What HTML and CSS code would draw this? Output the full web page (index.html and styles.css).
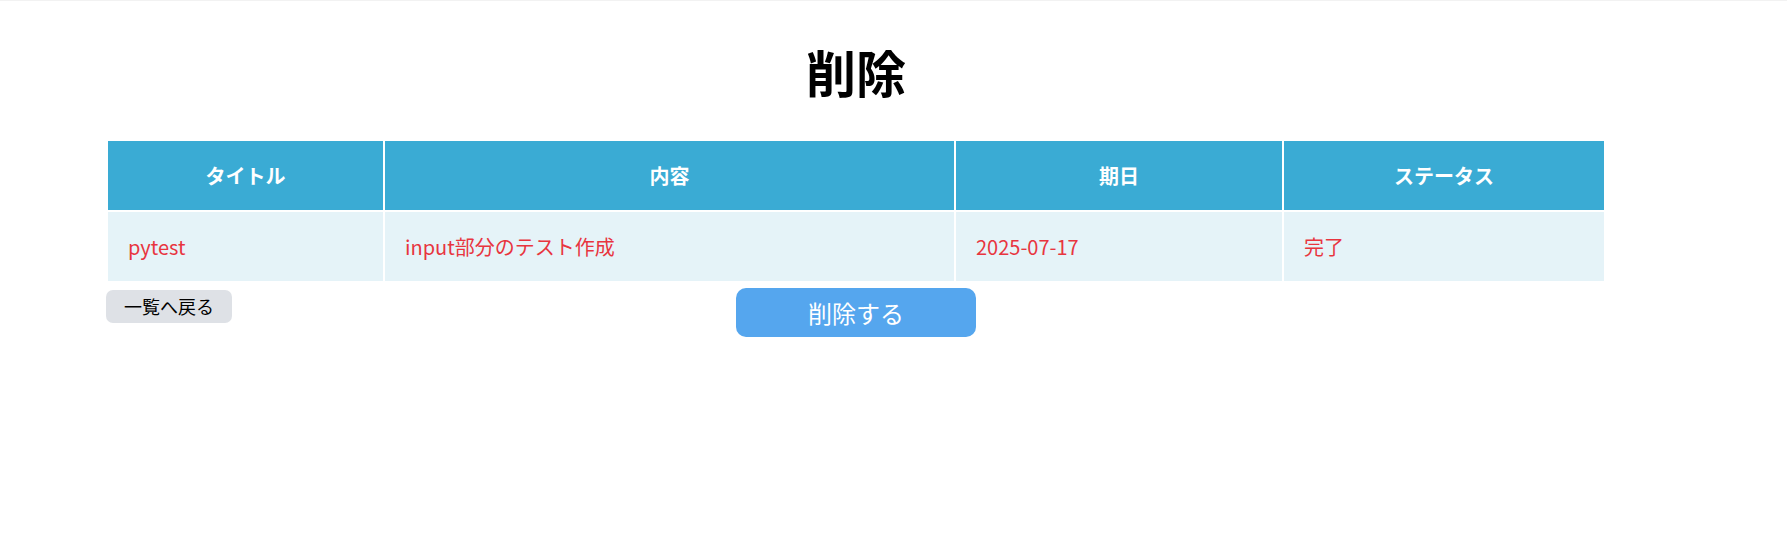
FILE: index.html
```html
<!DOCTYPE html>
<html lang="ja">
<head>
<meta charset="utf-8">
<title>削除</title>
<link rel="stylesheet" href="styles.css">
</head>
<body>
<div class="page">
  <h1 class="title">削除</h1>
  <table class="task-table">
    <colgroup>
      <col class="c1"><col class="c2"><col class="c3"><col class="c4">
    </colgroup>
    <thead>
      <tr><th>タイトル</th><th>内容</th><th>期日</th><th>ステータス</th></tr>
    </thead>
    <tbody>
      <tr><td>pytest</td><td>input部分のテスト作成</td><td>2025-07-17</td><td>完了</td></tr>
    </tbody>
  </table>
  <div class="actions">
    <a class="back-btn" href="#">一覧へ戻る</a>
    <button class="delete-btn" type="button">削除する</button>
    <span></span>
  </div>
</div>
</body>
</html>
```

FILE: styles.css
```css
html, body {
  margin: 0;
  padding: 0;
  background: #ffffff;
}
body {
  border-top: 1px solid #f2f2f2;
  font-family: "Noto Sans CJK JP", "Noto Sans", sans-serif;
}
.page {
  width: 1500px;
  margin-left: 106px;
}
.title {
  margin: 33px 0 31px;
  font-size: 50px;
  line-height: 74px;
  font-weight: 700;
  text-align: center;
  color: #000;
}
.task-table {
  width: 1500px;
  table-layout: fixed;
  border-collapse: separate;
  border-spacing: 2px;
}
.c1 { width: 275px; }
.c2 { width: 569px; }
.c3 { width: 326px; }
.c4 { width: 320px; }
.task-table th {
  height: 69px;
  padding: 0 20px;
  background: #3aabd4;
  color: #ffffff;
  font-size: 20px;
  font-weight: 700;
  text-align: center;
  vertical-align: middle;
}
.task-table td {
  height: 69px;
  padding: 0 20px;
  background: #e5f3f8;
  color: #e8353f;
  font-size: 20px;
  text-align: left;
  vertical-align: middle;
}
.actions {
  display: grid;
  grid-template-columns: 1fr auto 1fr;
  align-items: start;
  margin-top: 5px;
}
.back-btn {
  justify-self: start;
  margin-top: 2px;
  display: inline-block;
  height: 33px;
  line-height: 33px;
  padding: 0;
  box-sizing: border-box;
  width: 126px;
  background: #dee1e6;
  border-radius: 7px;
  color: #000;
  font-size: 18px;
  text-decoration: none;
  text-align: center;
}
.delete-btn {
  width: 240px;
  height: 49px;
  border: none;
  border-radius: 10px;
  background: #55a6ee;
  color: #fff;
  font-family: "Noto Sans CJK JP", "Noto Sans", sans-serif;
  font-size: 24px;
  padding: 0;
}
```
